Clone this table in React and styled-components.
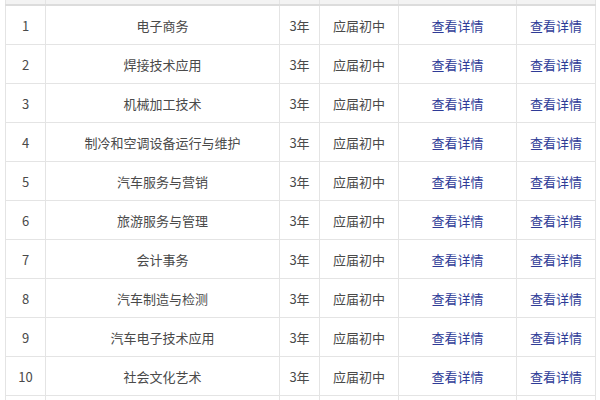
import React from "react";
import styled, { createGlobalStyle } from "styled-components";

const Global = createGlobalStyle`
  html, body { margin: 0; padding: 0; background: #fff; }
  body { font-family: "Noto Sans CJK SC", "Noto Sans", sans-serif; overflow: hidden; }
`;

const Page = styled.div`
  width: 600px;
  height: 400px;
  overflow: hidden;
  padding-left: 5px;
  box-sizing: border-box;
`;

const Table = styled.table`
  border-collapse: collapse;
  table-layout: fixed;
  width: 591px;
  font-size: 13px;
  color: #4a4a4a;
`;

const HeadCell = styled.th`
  height: 4px;
  padding: 0;
  background: #f3f3f3;
  border-left: 1px solid #e4e4e4;
  border-right: 1px solid #e4e4e4;
  border-bottom: 2px solid #dcdcdc;
`;

const Cell = styled.td`
  height: 36px;
  padding: 2px 0 0;
  text-align: center;
  vertical-align: middle;
  border: 1px solid #e4e4e4;
  line-height: 18px;
  white-space: nowrap;
`;

const Link = styled.a`
  color: #2e3b97;
  text-decoration: none;
`;

const rows = [
  "电子商务",
  "焊接技术应用",
  "机械加工技术",
  "制冷和空调设备运行与维护",
  "汽车服务与营销",
  "旅游服务与管理",
  "会计事务",
  "汽车制造与检测",
  "汽车电子技术应用",
  "社会文化艺术",
];

const widths = [40, 234, 40, 79, 118, 79];

export default function App() {
  return (
    <Page>
      <Global />
      <Table>
        <colgroup>
          {widths.map((w, i) => (
            <col key={i} style={{ width: w }} />
          ))}
        </colgroup>
        <thead>
          <tr>
            {widths.map((_, i) => (
              <HeadCell key={i} />
            ))}
          </tr>
        </thead>
        <tbody>
          {rows.map((name, i) => (
            <tr key={i}>
              <Cell>{i + 1}</Cell>
              <Cell>{name}</Cell>
              <Cell>3年</Cell>
              <Cell>应届初中</Cell>
              <Cell>
                <Link href="#">查看详情</Link>
              </Cell>
              <Cell>
                <Link href="#">查看详情</Link>
              </Cell>
            </tr>
          ))}
          <tr>
            {widths.map((_, i) => (
              <Cell key={i} />
            ))}
          </tr>
        </tbody>
      </Table>
    </Page>
  );
}
